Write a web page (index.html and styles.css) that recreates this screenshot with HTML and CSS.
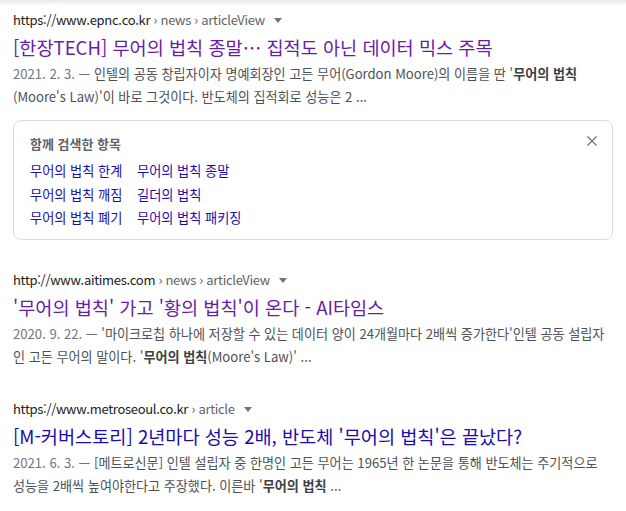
FILE: index.html
```html
<!DOCTYPE html>
<html lang="ko">
<head>
<meta charset="utf-8">
<link rel="stylesheet" href="styles.css">
</head>
<body>
<div class="topshadow"></div>
<main class="results">
  <div class="result first">
    <div class="url">https://www.epnc.co.kr <span class="crumb">› news › articleView</span><span class="caret"></span></div>
    <a class="title visited">[한장TECH] 무어의 법칙 종말… 집적도 아닌 데이터 믹스 주목</a>
    <div class="snippet"><span class="date">2021. 2. 3. — </span>인텔의 공동 창립자이자 명예회장인 고든 무어(Gordon Moore)의 이름을 딴 '<b>무어의 법칙</b><br>(Moore's Law)'이 바로 그것이다. 반도체의 집적회로 성능은 2 ...</div>
  </div>

  <section class="related">
    <div class="related-head">
      <span class="related-title">함께 검색한 항목</span>
      <svg class="close" width="10" height="10" viewBox="0 0 10 10"><path d="M0.5 0.5L9.5 9.5M9.5 0.5L0.5 9.5" stroke="#70757a" stroke-width="1.3" fill="none"/></svg>
    </div>
    <div class="related-grid">
      <a>무어의 법칙 한계</a><a>무어의 법칙 종말</a>
      <a>무어의 법칙 깨짐</a><a>길더의 법칙</a>
      <a>무어의 법칙 폐기</a><a>무어의 법칙 패키징</a>
    </div>
  </section>

  <div class="result">
    <div class="url">http://www.aitimes.com <span class="crumb">› news › articleView</span><span class="caret"></span></div>
    <a class="title visited">'무어의 법칙' 가고 '황의 법칙'이 온다 - AI타임스</a>
    <div class="snippet"><span class="date">2020. 9. 22. — </span>'마이크로칩 하나에 저장할 수 있는 데이터 양이 24개월마다 2배씩 증가한다'인텔 공동 설립자<br>인 고든 무어의 말이다. '<b>무어의 법칙</b>(Moore's Law)' ...</div>
  </div>

  <div class="result">
    <div class="url">https://www.metroseoul.co.kr <span class="crumb">› article</span><span class="caret"></span></div>
    <a class="title">[M-커버스토리] 2년마다 성능 2배, 반도체 '무어의 법칙'은 끝났다?</a>
    <div class="snippet"><span class="date">2021. 6. 3. — </span>[메트로신문] 인텔 설립자 중 한명인 고든 무어는 1965년 한 논문을 통해 반도체는 주기적으로<br>성능을 2배씩 높여야한다고 주장했다. 이른바 '<b>무어의 법칙</b> ...</div>
  </div>
</main>
</body>
</html>
```
FILE: styles.css
```css
* { box-sizing: border-box; }
html, body { margin: 0; padding: 0; background: #fff; }
body {
  font-family: "Noto Sans CJK KR", "Noto Sans", sans-serif;
  color: #4d5156;
  width: 626px;
  height: 511px;
  overflow: hidden;
}
.topshadow {
  height: 6px;
  background: linear-gradient(#e9e9e9, #fff);
}
.results {
  padding: 4px 13px 0 13px;
}
.result { margin-bottom: 31px; }
.result.first { margin-bottom: 12px; }
.url {
  font-size: 13px;
  letter-spacing: -0.3px;
  line-height: 20px;
  height: 20px;
  color: #202124;
  white-space: nowrap;
}
.crumb { color: #5f6368; }
.caret {
  display: inline-block;
  vertical-align: middle;
  width: 0; height: 0;
  border-left: 4px solid transparent;
  border-right: 4px solid transparent;
  border-top: 5px solid #70757a;
  margin-left: 9px;
  margin-top: -1px;
}
.title {
  display: block;
  font-size: 18.6px;
  line-height: 26px;
  margin-top: 4px;
  color: #1a0dab;
  white-space: nowrap;
}
.title.visited { color: #681da8; }
.snippet {
  font-size: 13.1px;
  line-height: 23px;
  margin-top: 2px;
  color: #4d5156;
  white-space: nowrap;
}
.date { color: #70757a; }
.snippet b { color: #3c4043; font-weight: 700; }
.related {
  border: 1px solid #dadce0;
  border-radius: 8px;
  padding: 11px 15px 10px 16px;
  margin: 0 0 30px 0;
  height: 120px;
}
.related-head {
  display: flex;
  justify-content: space-between;
  align-items: center;
  height: 22px;
}
.related-title {
  font-size: 13px;
  font-weight: 700;
  color: #5f6368;
}
.close { margin-top: -5px; }
.related-grid {
  display: grid;
  grid-template-columns: 107px auto;
  justify-content: start;
  margin-top: 5px;
}
.related-grid a {
  font-size: 13.2px;
  line-height: 23.5px;
  color: #1a0dab;
  white-space: nowrap;
}
```
